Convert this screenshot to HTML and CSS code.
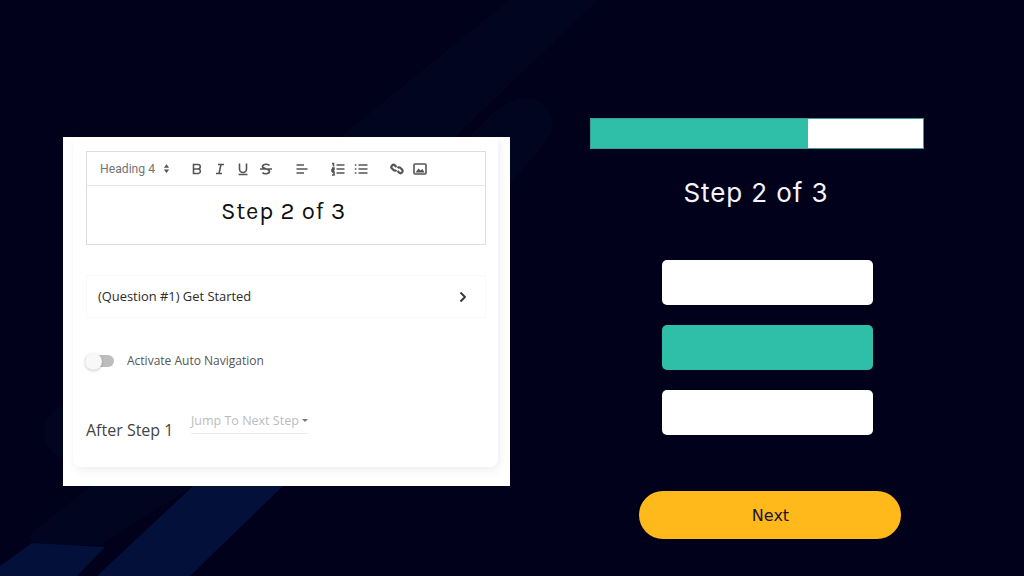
FILE: index.html
```html
<!DOCTYPE html>
<html lang="en">
<head>
<meta charset="utf-8">
<title>Step 2 of 3</title>
<link rel="stylesheet" href="styles.css">
</head>
<body>
<svg class="backdrop" viewBox="0 0 1024 576" aria-hidden="true">
  <polygon class="band-soft" points="509,0 598,0 400,190 300,300 200,300 340,137"/>
  <path class="band-soft" d="M486,120 Q520,85 545,105 Q562,125 540,150 L300,420 L100,545 L40,545 Q25,540 35,530 L200,400 Z"/>
  <circle class="band-soft" cx="72" cy="432" r="28"/>
  <polygon class="band-bright" points="0,566 32,543 105,547 77,576 0,576"/>
  <polygon class="band-bright" points="193,486 283,486 190,576 97,576"/>
</svg>
<main class="stage">
  <section class="shot">
    <div class="card">
      <div class="editor">
        <div class="toolbar">
          <span class="select">Heading 4
            <svg class="sort" viewBox="0 0 8 12"><path d="M4 1 7 5H1Z M4 11 1 7H7Z"/></svg>
          </span>
          <svg class="tool" viewBox="0 0 14 14"><path d="M3.500 2.500h4.500a2.200 2.200 0 0 1 0 4.500H3.500Zm0 4.500h5.100a2.300 2.300 0 0 1 0 4.500H3.500Z"/></svg>
          <svg class="tool" viewBox="0 0 14 14"><path d="M5 2.500h6M3 11.500h6M8 2.500 6 11.500"/></svg>
          <svg class="tool" viewBox="0 0 14 14"><path d="M3.500 1.500v5.500a3.500 3.500 0 0 0 7 0V1.500M2.500 12.500h9"/></svg>
          <svg class="tool" viewBox="0 0 14 14"><path d="M10.500 3.500C9.500 2 4 1.500 3.500 4.500 3.200 7 10.800 6.500 10.500 9.500 10 12.500 4.500 12 3.500 10.500M1 7h12"/></svg>
          <svg class="tool gap" viewBox="0 0 14 14"><path d="M1.500 3h7.500M1.500 7h11M1.500 11h7.500"/></svg>
          <svg class="tool gap" viewBox="0 0 14 14"><path d="M5.500 3h8M5.500 7h8M5.500 11h8M1 1.500h1.500v3M1 6h2v1.500H1V9h2M1 10h2v3H1"/></svg>
          <svg class="tool" viewBox="0 0 14 14"><path d="M4.500 3h9M4.500 7h9M4.500 11h9M.8 3h1.600M.8 7h1.600M.8 11h1.600"/></svg>
          <svg class="tool gap" viewBox="0 0 14 14"><path class="thick" d="M6.500 5 5 3.500a2 2 0 0 0-3 3L3.500 8a2 2 0 0 0 3 0M7.500 9l1.500 1.500a2 2 0 0 0 3-3L10.500 6a2 2 0 0 0-3 0"/></svg>
          <svg class="tool" viewBox="0 0 14 14"><rect x="1" y="2" width="12" height="10" rx="1"/><path class="solid" d="M2.500 10.500 5.500 6.500 7.500 8.500 9.500 7 11.500 10.500Z"/></svg>
        </div>
        <div class="editor-body">Step 2 of 3</div>
      </div>
      <div class="question">
        <span>(Question #1) Get Started</span>
        <svg class="chevron" viewBox="0 0 10 12"><path d="M2.500 1.500 7 6 2.500 10.500"/></svg>
      </div>
      <div class="auto-nav">
        <span class="toggle"><span class="knob"></span></span>
        <span class="auto-label">Activate Auto Navigation</span>
      </div>
      <div class="after">
        <span class="after-label">After Step 1</span>
        <span class="jump">Jump To Next Step<i class="caret"></i></span>
      </div>
    </div>
  </section>
  <section class="quiz">
    <div class="progress"><div class="progress-fill"></div></div>
    <h1 class="quiz-title">Step 2 of 3</h1>
    <div class="options">
      <div class="option"></div>
      <div class="option selected"></div>
      <div class="option"></div>
    </div>
    <button class="next" type="button">Next</button>
  </section>
</main>
</body>
</html>
```

FILE: styles.css
```css
* { box-sizing: border-box; }
html, body { margin: 0; height: 576px; overflow: hidden; background: #01011b; }

.backdrop { position: absolute; left: 0; top: 0; width: 1024px; height: 576px; }
.band-soft { fill: #01051f; }
.band-bright { fill: #03103a; }

.stage { position: relative; display: flex; height: 576px; padding-left: 63px; }

/* left screenshot */
.shot {
  width: 447px; height: 349px; margin-top: 137px;
  padding: 0 12px 19px 10px;
  background: #fff;
}
.card {
  height: 100%; padding: 14px 0 0 13px;
  background: #fff; border-radius: 0 0 8px 8px;
  box-shadow: 2px 3px 10px rgba(90, 90, 140, .1);
}
.editor { width: 400px; height: 94px; border: 1px solid #dedede; }
.toolbar {
  display: flex; align-items: center; height: 34px; padding-left: 13px;
  border-bottom: 1px solid #e6e6e6;
}
.select {
  display: flex; align-items: center; gap: 8px; width: 90px; padding-top: 1px;
  font: 12.200px/1 Roboto, sans-serif; color: #747474;
}
.sort { width: 7px; height: 11px; fill: #555; }
.tool {
  width: 14px; height: 14px; margin-right: 9px;
  fill: none; stroke: #555; stroke-width: 1.600;
}
.tool.gap { margin-left: 13px; }
.thick { stroke-width: 2.200; }
.solid { fill: #555; stroke: none; }
.editor-body {
  height: 58px; padding-top: 11px; padding-right: 5px; text-align: center;
  font: 24px/29px Karla, Lato, sans-serif; color: #111; letter-spacing: .800px;
}
.question {
  display: flex; align-items: center; justify-content: space-between;
  width: 400px; height: 43px; margin-top: 30px; padding: 0 17px 0 11px;
  border: 1px solid #f9f9f9;
  font: 500 12.900px/1 "Open Sans", sans-serif; color: #2a2a2a;
}
.chevron { width: 10px; height: 12px; fill: none; stroke: #333; stroke-width: 1.800; }
.auto-nav { display: flex; align-items: center; margin-top: 37px; margin-left: -1px; }
.toggle { position: relative; display: block; width: 29px; height: 12px; border-radius: 6px; background: #bdbdbd; }
.knob {
  position: absolute; left: 0; top: -2px; width: 17px; height: 17px; border-radius: 50%;
  background: #f8f8f8; box-shadow: 0 1px 3px rgba(0, 0, 0, .22);
}
.auto-label { margin-left: 13px; font: 12px/1 "Open Sans", sans-serif; color: #555; }
.after { display: flex; align-items: flex-start; margin-top: 38px; }
.after-label { margin-top: 13px; width: 105px; font: 16px/24px "Open Sans", sans-serif; color: #444; }
.jump {
  display: flex; align-items: center; width: 117px; height: 25px; margin-top: 4px; padding-top: 1px;
  border-bottom: 1px solid #ececec;
  font: 12.500px/1 "Open Sans", sans-serif; color: #bcbcbc;
}
.caret {
  margin-left: 3px; margin-bottom: 2px; border: 3px solid transparent; border-top-color: #777; border-bottom: 0;
}

/* right quiz */
.quiz { width: 334px; margin-left: 80px; padding-top: 118px; }
.progress { height: 31px; background: #fff; border: 1px solid #3f9c97; }
.progress-fill { width: 217px; height: 100%; background: #2fbfa8; }
.quiz-title {
  width: 332px; margin: 26px 0 0; text-align: center;
  font: 400 26px/36px Inter, sans-serif; letter-spacing: .900px; color: #f4f4fa;
}
.options { display: flex; flex-direction: column; gap: 20px; width: 211px; margin: 49px 0 0 72px; }
.option { height: 45px; border-radius: 5px; background: #fff; }
.option.selected { background: #2fbfa8; }
.next {
  display: block; width: 262px; height: 48px; margin: 56px 0 0 49px; padding: 2px 0 0 1px;
  border: 0; border-radius: 24px; background: #ffb91a; color: #1c1530;
  font: 16px/1 "DejaVu Sans", sans-serif;
}
```
